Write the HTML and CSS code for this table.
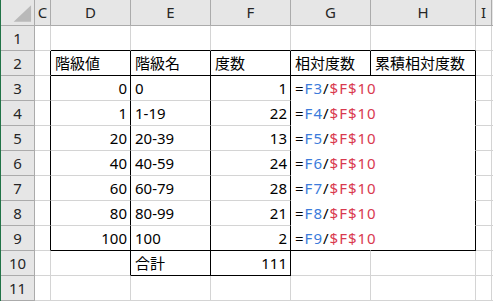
FILE: index.html
```html
<!DOCTYPE html>
<html lang="ja">
<head>
<meta charset="utf-8">
<link rel="stylesheet" href="styles.css">
</head>
<body>
<div class="app">
  <div class="edge"></div>
  <div class="sheet">
    <!-- header row -->
    <div class="c hd corner"><svg width="34" height="25" viewBox="0 0 34 25"><polygon points="13,22 31,22 31,5" fill="#b9b9b9"/></svg></div>
    <div class="c hd ch">C</div>
    <div class="c hd ch">D</div>
    <div class="c hd ch">E</div>
    <div class="c hd ch">F</div>
    <div class="c hd ch">G</div>
    <div class="c hd ch">H</div>
    <div class="c hd ch">I</div>
    <div class="c hd end"></div>

    <!-- row 1 -->
    <div class="c hd rh">1</div>
    <div class="c"></div>
    <div class="c bb"></div>
    <div class="c bb"></div>
    <div class="c bb"></div>
    <div class="c bb"></div>
    <div class="c bb"></div>
    <div class="c"></div>
    <div class="c end"></div>

    <!-- row 2 -->
    <div class="c hd rh">2</div>
    <div class="c br"></div>
    <div class="c br bb">階級値</div>
    <div class="c br bb">階級名</div>
    <div class="c br bb">度数</div>
    <div class="c br bb">相対度数</div>
    <div class="c br bb">累積相対度数</div>
    <div class="c"></div>
    <div class="c end"></div>

    <!-- row 3 -->
    <div class="c hd rh">3</div>
    <div class="c br"></div>
    <div class="c br num">0</div>
    <div class="c br">0</div>
    <div class="c br num">1</div>
    <div class="c wr wb f">=<span class="rb">F3</span>/<span class="rr">$F$10</span></div>
    <div class="c br wb"></div>
    <div class="c"></div>
    <div class="c end"></div>

    <!-- row 4 -->
    <div class="c hd rh">4</div>
    <div class="c br"></div>
    <div class="c br num">1</div>
    <div class="c br">1-19</div>
    <div class="c br num">22</div>
    <div class="c wr wb f">=<span class="rb">F4</span>/<span class="rr">$F$10</span></div>
    <div class="c br wb"></div>
    <div class="c"></div>
    <div class="c end"></div>

    <!-- row 5 -->
    <div class="c hd rh">5</div>
    <div class="c br"></div>
    <div class="c br num">20</div>
    <div class="c br">20-39</div>
    <div class="c br num">13</div>
    <div class="c wr wb f">=<span class="rb">F5</span>/<span class="rr">$F$10</span></div>
    <div class="c br wb"></div>
    <div class="c"></div>
    <div class="c end"></div>

    <!-- row 6 -->
    <div class="c hd rh">6</div>
    <div class="c br"></div>
    <div class="c br num">40</div>
    <div class="c br">40-59</div>
    <div class="c br num">24</div>
    <div class="c wr wb f">=<span class="rb">F6</span>/<span class="rr">$F$10</span></div>
    <div class="c br wb"></div>
    <div class="c"></div>
    <div class="c end"></div>

    <!-- row 7 -->
    <div class="c hd rh">7</div>
    <div class="c br"></div>
    <div class="c br num">60</div>
    <div class="c br">60-79</div>
    <div class="c br num">28</div>
    <div class="c wr wb f">=<span class="rb">F7</span>/<span class="rr">$F$10</span></div>
    <div class="c br wb"></div>
    <div class="c"></div>
    <div class="c end"></div>

    <!-- row 8 -->
    <div class="c hd rh">8</div>
    <div class="c br"></div>
    <div class="c br num">80</div>
    <div class="c br">80-99</div>
    <div class="c br num">21</div>
    <div class="c wr wb f">=<span class="rb">F8</span>/<span class="rr">$F$10</span></div>
    <div class="c br wb"></div>
    <div class="c"></div>
    <div class="c end"></div>

    <!-- row 9 -->
    <div class="c hd rh">9</div>
    <div class="c br"></div>
    <div class="c br bb num">100</div>
    <div class="c br bb">100</div>
    <div class="c br bb num">2</div>
    <div class="c wr bb f">=<span class="rb">F9</span>/<span class="rr">$F$10</span></div>
    <div class="c br bb"></div>
    <div class="c"></div>
    <div class="c end"></div>

    <!-- row 10 -->
    <div class="c hd rh">10</div>
    <div class="c"></div>
    <div class="c br"></div>
    <div class="c br bb">合計</div>
    <div class="c br bb num">111</div>
    <div class="c"></div>
    <div class="c"></div>
    <div class="c"></div>
    <div class="c end"></div>

    <!-- row 11 -->
    <div class="c hd rh">11</div>
    <div class="c"></div>
    <div class="c"></div>
    <div class="c"></div>
    <div class="c"></div>
    <div class="c"></div>
    <div class="c"></div>
    <div class="c"></div>
    <div class="c end"></div>
  </div>
</div>
</body>
</html>
```

FILE: styles.css
```css
html, body {
  margin: 0;
  padding: 0;
  background: #ffffff;
}

.app {
  display: flex;
  width: 493px;
  height: 301px;
  overflow: hidden;
}

.edge {
  width: 1px;
  background: #217346;
  flex: none;
}

.sheet {
  display: grid;
  grid-template-columns: 34px 16px 80px 80px 80px 80px 105px 16px 1px;
  grid-template-rows: 26px repeat(11, 25px);
  font-family: "Noto Sans", "Noto Sans CJK JP", sans-serif;
  font-size: 15px;
  color: #000;
}

.c {
  box-sizing: border-box;
  border-right: 1px solid #d4d4d4;
  border-bottom: 1px solid #d4d4d4;
  display: flex;
  align-items: center;
  padding: 0 2px 0 4px;
  white-space: nowrap;
  line-height: 1;
  min-width: 0;
}

.c.end {
  border-right: none;
}

.hd {
  background: #e6e6e6;
  border-right-color: #ababab;
  border-bottom-color: #ababab;
  color: #262626;
}

.corner {
  padding: 0;
}

.corner svg {
  display: block;
}

.ch,
.rh {
  justify-content: center;
  padding: 0;
}

.br {
  border-right-color: #000;
}

.bb {
  border-bottom-color: #000;
}

.wr {
  border-right-color: #fff;
}

.wb {
  border-bottom-color: #fff;
}

.num {
  justify-content: flex-end;
  padding: 0 3px 0 2px;
}

.f {
  overflow: visible;
  position: relative;
  z-index: 1;
  letter-spacing: 1px;
}

.rb {
  color: #3b7bdb;
}

.rr {
  color: #d9394f;
}
```
